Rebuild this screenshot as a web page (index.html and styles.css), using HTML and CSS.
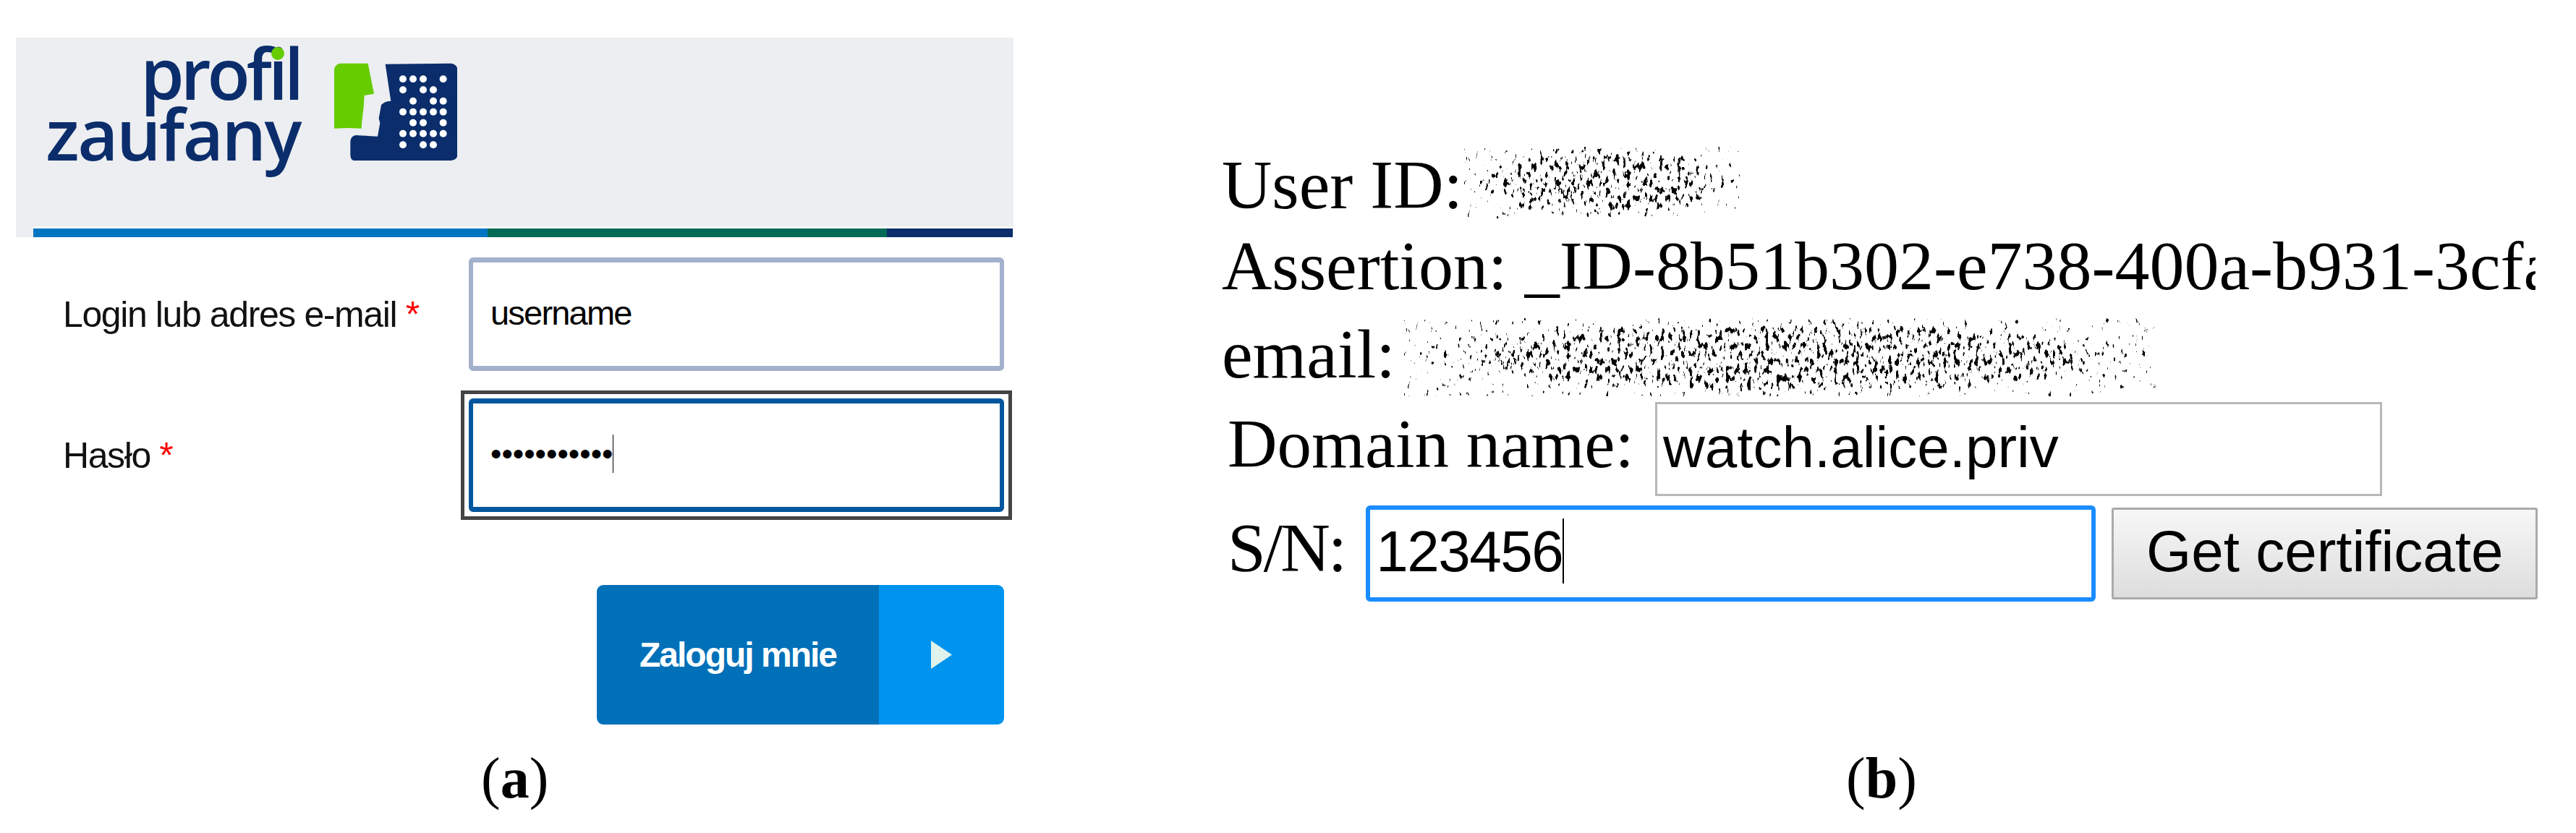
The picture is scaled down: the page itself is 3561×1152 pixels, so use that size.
FILE: index.html
```html
<!DOCTYPE html>
<html lang="pl">
<head>
<meta charset="utf-8">
<title>Profil Zaufany</title>
<link rel="stylesheet" href="styles.css">
</head>
<body>
<svg class="defs" aria-hidden="true">
  <filter id="speckle" x="0" y="0" width="100%" height="100%" color-interpolation-filters="sRGB">
    <feTurbulence type="fractalNoise" baseFrequency=".2 .09" numOctaves="3" seed="11" result="n"/>
    <feColorMatrix in="n" type="matrix" values="0 0 0 0 0  0 0 0 0 0  0 0 0 0 0  1 0 0 0 0" result="a"/>
    <feComposite in="a" in2="SourceGraphic" operator="arithmetic" k1="0" k2="1" k3=".15" k4="0"/>
    <feComponentTransfer><feFuncA type="linear" slope="16" intercept="-11.6"/></feComponentTransfer>
  </filter>
</svg>

<section class="fig-a">
  <header class="panel">
    <div class="logo">
      <div class="logo-text">
        <div class="logo-line logo-line-top">prof<span class="logo-i">i</span>l</div>
        <div class="logo-line logo-line-bottom">zaufany</div>
      </div>
      <svg class="logo-mark" viewBox="125 50 510 405" aria-hidden="true">
        <path class="mark-green" d="M150 52L265 52L290 178L250 185L247 235L240 290L238 322L180 320L125 322L125 75Q130 55 150 52Z"/>
        <path class="mark-navy" d="M337 55L610 52Q635 55 637 80L637 430Q635 452 610 455L205 455Q192 450 192 430L192 375Q195 352 215 350L305 355L315 300L310 280L320 225Q330 210 360 208Z"/>
        <g class="mark-dots">
          <circle cx="410" cy="117" r="15"/><circle cx="452" cy="117" r="15"/><circle cx="494" cy="117" r="15"/><circle cx="577" cy="117" r="15"/>
          <circle cx="410" cy="162" r="15"/><circle cx="494" cy="162" r="15"/><circle cx="536" cy="162" r="15"/>
          <circle cx="452" cy="208" r="15"/><circle cx="536" cy="208" r="15"/><circle cx="577" cy="208" r="15"/>
          <circle cx="410" cy="253" r="15"/><circle cx="452" cy="253" r="15"/><circle cx="494" cy="253" r="15"/><circle cx="536" cy="253" r="15"/><circle cx="577" cy="253" r="15"/>
          <circle cx="452" cy="298" r="15"/><circle cx="494" cy="298" r="15"/><circle cx="577" cy="298" r="15"/>
          <circle cx="410" cy="343" r="15"/><circle cx="452" cy="343" r="15"/><circle cx="494" cy="343" r="15"/><circle cx="536" cy="343" r="15"/><circle cx="577" cy="343" r="15"/>
          <circle cx="410" cy="390" r="15"/><circle cx="494" cy="390" r="15"/><circle cx="536" cy="390" r="15"/>
        </g>
      </svg>
    </div>
    <div class="stripe">
      <span class="stripe-blue"></span><span class="stripe-green"></span><span class="stripe-navy"></span>
    </div>
  </header>

  <form class="login">
    <div class="login-row">
      <label class="login-label">Login lub adres e-mail <span class="req">*</span></label>
      <div class="login-input">username</div>
    </div>
    <div class="login-row login-row-second">
      <label class="login-label">Hasło <span class="req">*</span></label>
      <div class="focus-ring">
        <div class="login-input login-input-focus">•••••••••••<span class="caret-thin"></span></div>
      </div>
    </div>
    <div class="submit">
      <span class="submit-text">Zaloguj mnie</span>
      <span class="submit-arrow">
        <svg class="submit-tri" viewBox="0 0 29 39" aria-hidden="true"><path d="M0 0L29 19.5L0 39Z"/></svg>
      </span>
    </div>
  </form>

  <p class="caption caption-a">(<b>a</b>)</p>
</section>

<section class="fig-b">
  <div class="cert-line"><span>User ID:</span><div class="speckle speckle-id"></div></div>
  <div class="cert-line cert-clip"><span>Assertion: _ID-8b51b302-e738-400a-b931-3cfa</span></div>
  <div class="cert-line cert-email"><span>email:</span><div class="speckle speckle-email"></div></div>

  <div class="cert-row cert-row-domain">
    <span class="cert-label">Domain name:</span>
    <div class="cert-input">watch.alice.priv</div>
  </div>
  <div class="cert-row cert-row-sn">
    <span class="cert-label cert-label-tight">S/N:</span>
    <div class="cert-input cert-input-focus">123456<span class="caret-thick"></span></div>
    <div class="cert-button">Get certificate</div>
  </div>

  <p class="caption caption-b">(<b>b</b>)</p>
</section>
</body>
</html>
```

FILE: styles.css
```css
html, body {
  margin: 0;
  padding: 0;
  background: #fff;
  height: 1152px;
  overflow: hidden;
}
body {
  display: flex;
  align-items: flex-start;
  color: #000;
}
.defs {
  width: 0;
  height: 0;
  position: absolute;
}

/* Figure (a) */
.fig-a {
  width: 1420px;
  flex: none;
  font-family: "Liberation Sans", Arial, sans-serif;
}
.panel {
  display: flex;
  flex-direction: column;
  justify-content: space-between;
  box-sizing: border-box;
  margin: 52px 0 0 22px;
  width: 1379px;
  height: 276px;
  background: #eceef1;
}
.logo {
  display: flex;
  align-items: flex-start;
  padding: 6px 0 0 41px;
}
.logo-text {
  font-family: "Open Sans", "Noto Sans", sans-serif;
  font-size: 97px;
  font-weight: 600;
  line-height: 84px;
  color: #0b2d6b;
  text-align: right;
  width: 352px;
  font-variant-ligatures: none;
}
.logo-line-top {
  letter-spacing: -5px;
}
.logo-line-bottom {
  letter-spacing: -2.5px;
}
.logo-i {
  position: relative;
}
.logo-i::after {
  content: "";
  position: absolute;
  left: 4px;
  top: 31px;
  width: 18px;
  height: 18px;
  border-radius: 50%;
  background: #66cc00;
}
.logo-mark {
  width: 170px;
  height: 135px;
  margin: 29px 0 0 47px;
  flex: none;
}
.mark-green { fill: #66cc00; }
.mark-navy { fill: #0b2d6b; }
.mark-dots { fill: #fff; }

.stripe {
  display: flex;
  margin: 0 1px 0 24px;
  height: 12px;
  border-top: 3px solid #f8f9fa;
}
.stripe-blue { width: 628px; background: #0075c2; }
.stripe-green { width: 552px; background: #006a56; }
.stripe-navy { flex: 1; background: #0b2d6b; }

.login {
  display: block;
  margin-top: 28px;
}
.login-row {
  display: flex;
  align-items: center;
  padding-left: 87px;
}
.login-row-second {
  margin-top: 38px;
}
.login-label {
  width: 561px;
  flex: none;
  font-size: 50px;
  letter-spacing: -1.4px;
  color: #111;
}
.req { color: #f00; }
.login-input {
  box-sizing: border-box;
  width: 740px;
  height: 157px;
  border: solid #a3b1cc;
  border-width: 7px 6px;
  border-radius: 6px;
  padding-left: 24px;
  font-size: 47px;
  letter-spacing: -1.8px;
  line-height: 140px;
  white-space: nowrap;
  background: #fff;
}
.focus-ring {
  margin: -11px;
  padding: 6px;
  border: 5px solid #444;
}
.login-input-focus {
  border-color: #00579e;
  font-size: 44px;
  letter-spacing: 0;
}
.caret-thin {
  display: inline-block;
  width: 1px;
  height: 53px;
  background: #000;
  vertical-align: -11px;
}
.submit {
  display: flex;
  box-sizing: border-box;
  margin: 101px 0 0 825px;
  width: 563px;
  height: 193px;
  border-radius: 9px;
  overflow: hidden;
}
.submit-text {
  width: 390px;
  flex: none;
  display: flex;
  align-items: center;
  justify-content: center;
  background: #0070b8;
  color: #fff;
  font-size: 48px;
  letter-spacing: -2px;
  font-weight: 700;
}
.submit-arrow {
  flex: 1;
  display: flex;
  align-items: center;
  justify-content: center;
  background: #0094ef;
}
.submit-tri {
  width: 29px;
  height: 39px;
  fill: #dff2ec;
}

/* Captions */
.caption {
  margin: 0;
  font-family: "Liberation Serif", "Times New Roman", serif;
  font-size: 80px;
  line-height: 100px;
}
.caption-a {
  margin: 24px 0 0 665px;
}
.caption-b {
  margin: 194px 0 0 863px;
}

/* Figure (b) */
.fig-b {
  flex: 1;
  min-width: 0;
  padding: 200px 0 0 269px;
  font-family: "Liberation Serif", "Times New Roman", serif;
}
.cert-line {
  display: flex;
  align-items: flex-start;
  font-size: 96px;
  line-height: 112px;
  height: 112px;
  white-space: nowrap;
}
.cert-clip {
  width: 1816px;
  overflow: hidden;
}
.cert-email {
  margin-top: 10px;
}
.speckle {
  flex: none;
  filter: url(#speckle);
  background: radial-gradient(closest-side, #000 70%, transparent);
}
.speckle-id {
  width: 383px;
  height: 99px;
  margin: 3px 0 0 2px;
}
.speckle-email {
  width: 1039px;
  height: 108px;
  margin: 6px 0 0 12px;
}
.cert-row {
  display: flex;
  align-items: baseline;
  padding-left: 8px;
}
.cert-row-domain {
  margin-top: 10px;
  gap: 29px;
}
.cert-row-sn {
  margin-top: 13px;
  gap: 29px;
}
.cert-label {
  font-size: 95px;
  line-height: 112px;
}
.cert-label-tight {
  letter-spacing: -3px;
}
.cert-input {
  box-sizing: border-box;
  width: 1005px;
  height: 130px;
  border: 3px solid #b8b8b8;
  padding-left: 8px;
  font-family: "Liberation Sans", Arial, sans-serif;
  font-size: 80px;
  line-height: 120px;
  white-space: nowrap;
  background: #fff;
}
.cert-input-focus {
  width: 1009px;
  height: 133px;
  border: 6px solid #1a8cff;
  border-radius: 6px;
  padding-left: 8px;
  letter-spacing: -1.5px;
  line-height: 116px;
}
.caret-thick {
  display: inline-block;
  width: 2px;
  height: 90px;
  background: #000;
  vertical-align: -17px;
}
.cert-button {
  box-sizing: border-box;
  margin-left: -7px;
  width: 589px;
  height: 127px;
  border: 3px solid #aaa;
  border-radius: 3px;
  background: linear-gradient(#f7f7f7, #dddddd);
  font-family: "Liberation Sans", Arial, sans-serif;
  font-size: 80px;
  line-height: 115px;
  text-align: center;
  white-space: nowrap;
}
```
